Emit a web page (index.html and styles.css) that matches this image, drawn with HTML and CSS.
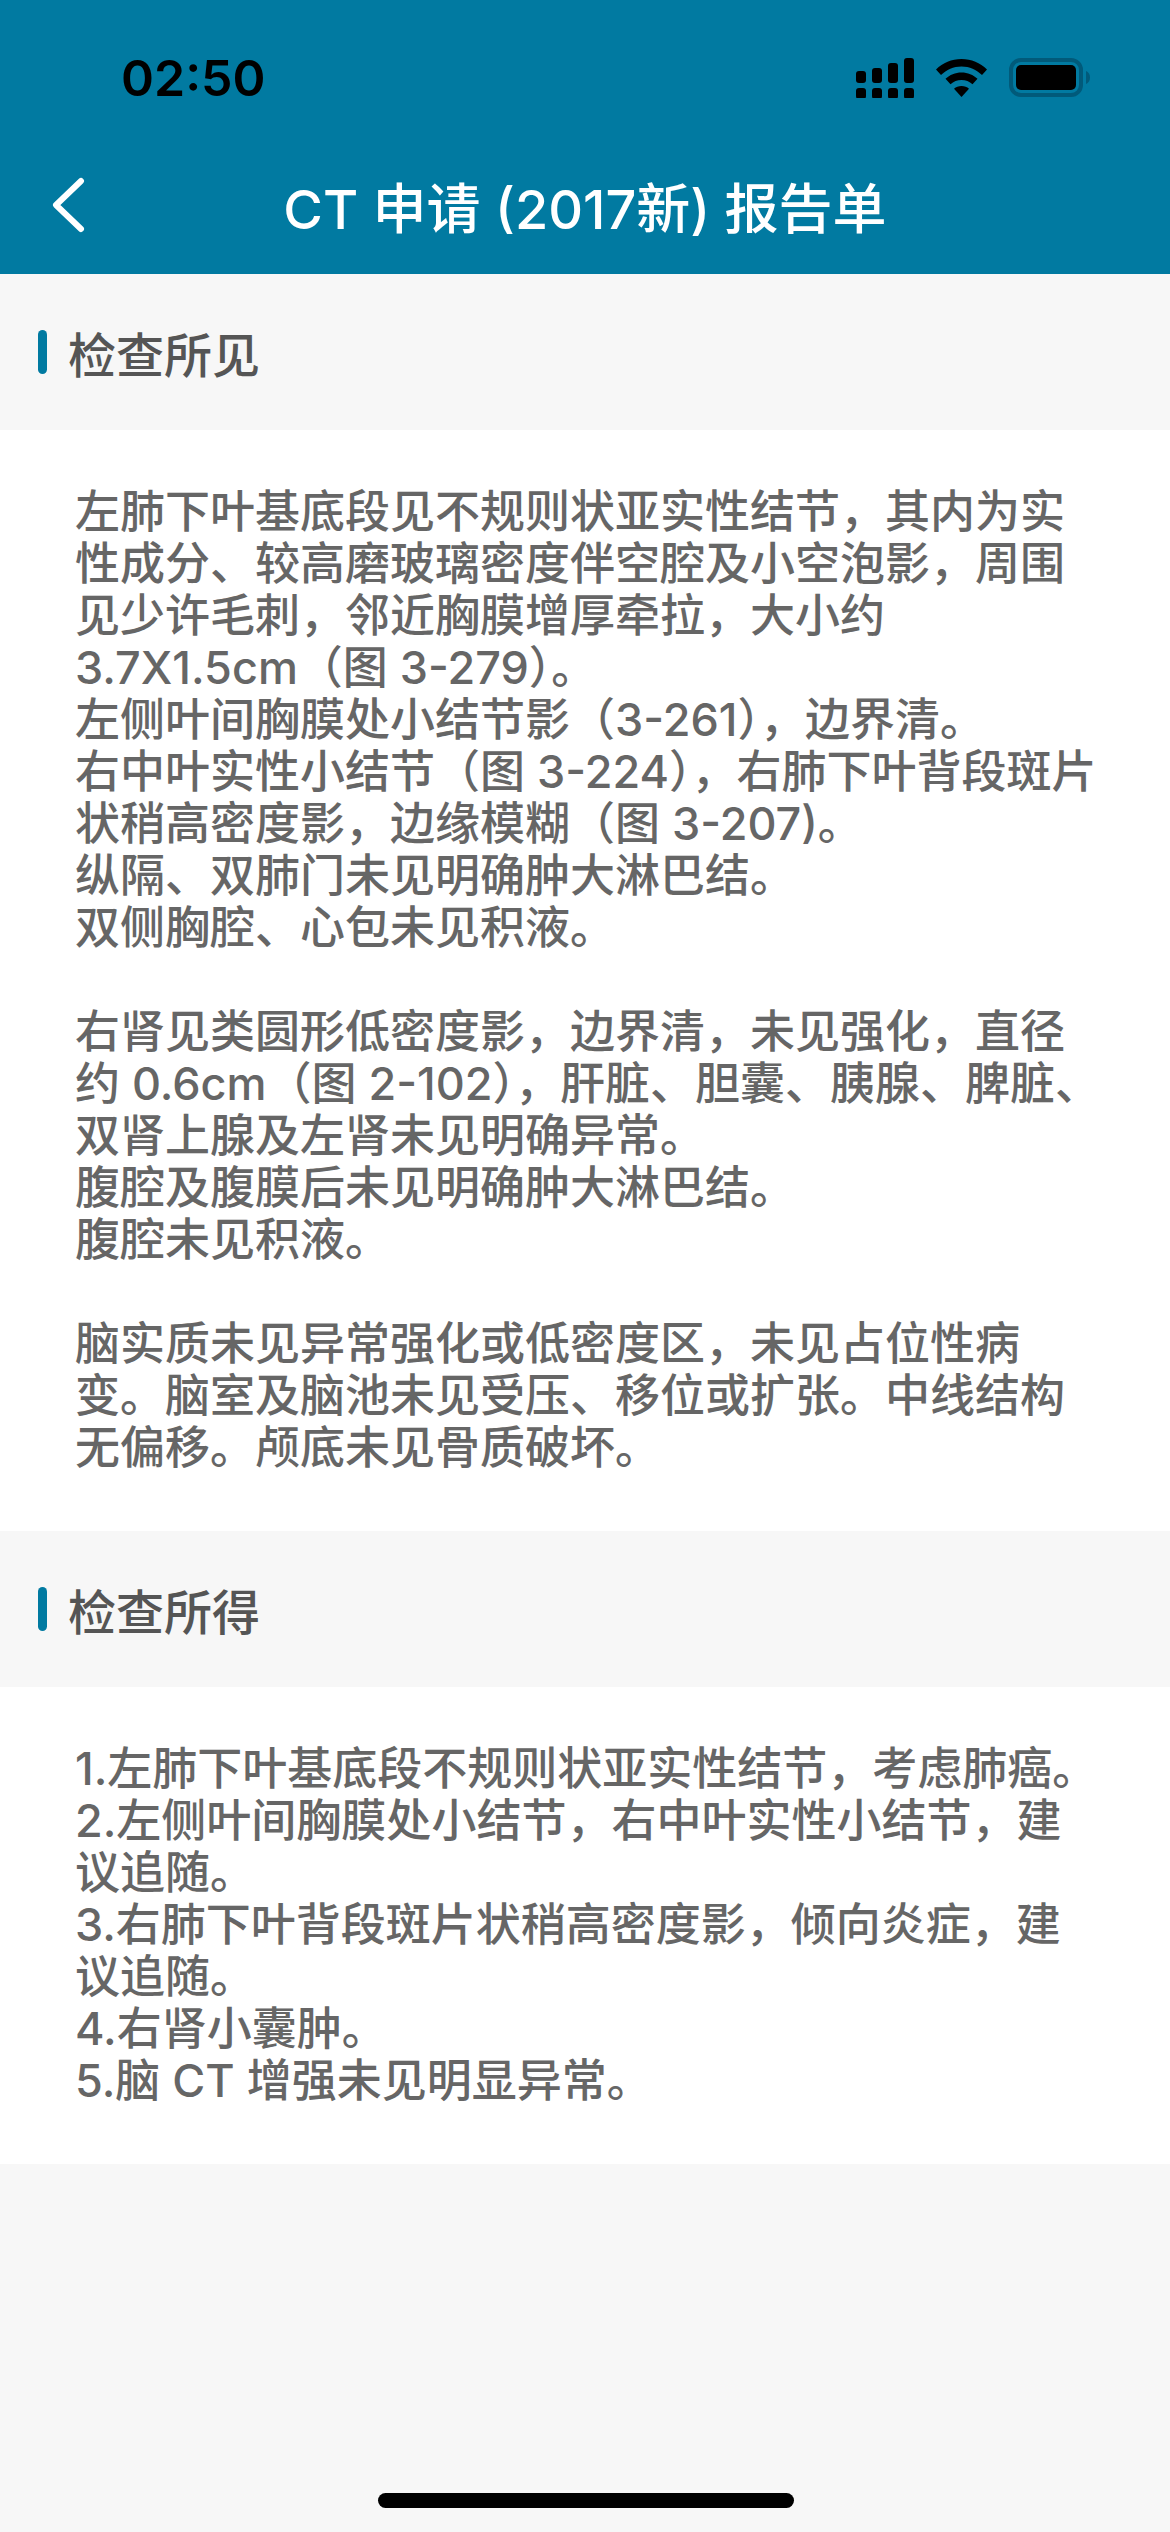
FILE: index.html
```html
<!DOCTYPE html>
<html lang="zh-CN">
<head>
  <meta charset="UTF-8">
  <meta name="viewport" content="width=device-width, initial-scale=1.0">
  <title>CT 申请 (2017新) 报告单</title>
  <link rel="stylesheet" href="styles.css">
</head>
<body>
  <header class="top-bar">
    <div class="status-bar">
      <span class="status-time">02:50</span>
      <div class="status-icons">
        <svg class="icon-signal" width="58" height="40" viewBox="0 0 58 40">
          <rect x="0" y="13" width="10" height="12" rx="3"/>
          <rect x="16" y="10" width="10" height="15" rx="3"/>
          <rect x="32" y="5" width="10" height="20" rx="3"/>
          <rect x="48" y="0" width="10" height="25" rx="3"/>
          <rect x="0" y="30" width="10" height="11" rx="3"/>
          <rect x="16" y="30" width="10" height="11" rx="3"/>
          <rect x="32" y="30" width="10" height="11" rx="3"/>
          <rect x="48" y="30" width="10" height="11" rx="3"/>
        </svg>
        <svg class="icon-wifi" width="51" height="38" viewBox="0 0 51 38">
          <path d="M25.5 0C15.5 0 7 3.8 0 10.5l5 5.5C10.500 10.800 17.500 7.500 25.500 7.500S40.500 10.800 46 16l5-5.500C44 3.800 35.500 0 25.500 0Z"/>
          <path d="M25.500 13.500c-6.200 0-11.700 2.400-16 6.300l5 5.400c3-2.600 6.800-4.200 11-4.200s8 1.600 11 4.200l5-5.400c-4.300-3.900-9.800-6.300-16-6.300Z"/>
          <path d="M25.500 27c-3 0-5.500 1-7.500 2.800L25.500 38 33 29.800C31 28 28.500 27 25.500 27Z"/>
        </svg>
        <svg class="icon-battery" width="82" height="40" viewBox="0 0 82 40">
          <rect class="battery-shell" x="2" y="2" width="70" height="35" rx="10"/>
          <path class="battery-cap" d="M77 13c2.500 1 4 3.500 4 6.500s-1.500 5.500-4 6.500Z"/>
          <rect x="7" y="7" width="60" height="25" rx="5"/>
        </svg>
      </div>
    </div>
    <div class="nav-bar">
      <svg class="back-icon" width="36" height="56" viewBox="0 0 36 56">
        <path d="M31 4 6 28l25 24"/>
      </svg>
      <h1 class="nav-title">CT 申请 (2017新) 报告单</h1>
    </div>
  </header>

  <main>
    <section>
      <h2 class="section-title">检查所见</h2>
      <div class="section-body">
        <p>左肺下叶基底段见不规则状亚实性结节，其内为实性成分、较高磨玻璃密度伴空腔及小空泡影，周围见少许毛刺，邻近胸膜增厚牵拉，大小约3.7X1.5cm（图 3-279）。<br>
        左侧叶间胸膜处小结节影（3-261），边界清。<br>
        右中叶实性小结节（图 3-224），右肺下叶背段斑片状稍高密度影，边缘模糊（图 3-207)。<br>
        纵隔、双肺门未见明确肿大淋巴结。<br>
        双侧胸腔、心包未见积液。<br>
        <br>
        右肾见类圆形低密度影，边界清，未见强化，直径约 0.6cm（图 2-102），肝脏、胆囊、胰腺、脾脏、双肾上腺及左肾未见明确异常。<br>
        腹腔及腹膜后未见明确肿大淋巴结。<br>
        腹腔未见积液。<br>
        <br>
        脑实质未见异常强化或低密度区，未见占位性病变。脑室及脑池未见受压、移位或扩张。中线结构无偏移。颅底未见骨质破坏。</p>
      </div>
    </section>

    <section>
      <h2 class="section-title">检查所得</h2>
      <div class="section-body">
        <p>1.左肺下叶基底段不规则状亚实性结节，考虑肺癌。<br>
        2.左侧叶间胸膜处小结节，右中叶实性小结节，建议追随。<br>
        3.右肺下叶背段斑片状稍高密度影，倾向炎症，建议追随。<br>
        4.右肾小囊肿。<br>
        5.脑 CT 增强未见明显异常。</p>
      </div>
    </section>
  </main>

  <div class="home-indicator"></div>
</body>
</html>
```

FILE: styles.css
```css
html, body {
  margin: 0;
  height: 100%;
}
body {
  position: relative;
  background-color: #f7f7f7;
  font-family: Inter, 'Noto Sans CJK SC', sans-serif;
  overflow: hidden;
}
.top-bar {
  background-color: #017aa1;
  height: 274px;
}
.status-bar {
  display: flex;
  justify-content: space-between;
  align-items: center;
  height: 156px;
  padding: 0 79px 0 121px;
}
.status-time {
  color: #000;
  font-size: 50px;
  font-weight: 600;
}
.status-icons {
  display: flex;
  align-items: center;
  gap: 22px;
}
.status-icons svg {
  display: block;
  fill: #000;
}
.battery-shell {
  fill: none;
  stroke: #015a7a;
  stroke-width: 4;
}
.icon-battery .battery-cap {
  fill: #015a7a;
}
.nav-bar {
  display: flex;
  align-items: center;
  justify-content: center;
  position: relative;
  height: 98px;
  margin-top: 0;
}
.back-icon {
  position: absolute;
  left: 50px;
  top: 21px;
  fill: none;
  stroke: #fff;
  stroke-width: 6;
  stroke-linecap: round;
  stroke-linejoin: round;
}
.nav-title {
  margin: 0;
  color: #fff;
  font-size: 54px;
  font-weight: 500;
}
.section-title {
  display: flex;
  align-items: center;
  height: 156px;
  box-sizing: border-box;
  margin: 0;
  padding: 0 0 0 38px;
  color: #555;
  font-size: 48px;
  font-weight: 500;
}
.section-title::before {
  content: '';
  width: 9px;
  height: 44px;
  margin-right: 21px;
  border-radius: 5px;
  background-color: #017aa1;
}
.section-body {
  background-color: #fff;
  padding: 56px 66px 57px 75px;
}
.section-body p {
  margin: 0;
  color: #666;
  font-size: 45px;
  font-weight: 500;
  line-height: 52px;
}
.home-indicator {
  position: absolute;
  left: 378px;
  bottom: 24px;
  width: 416px;
  height: 15px;
  border-radius: 8px;
  background-color: #000;
}
```
